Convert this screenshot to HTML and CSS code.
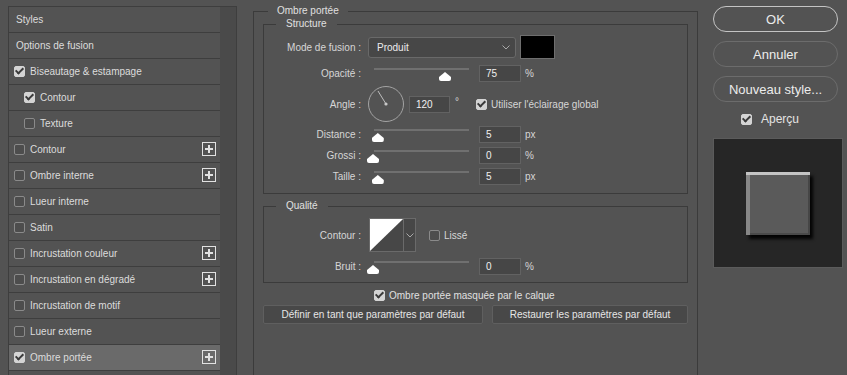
FILE: index.html
```html
<!DOCTYPE html>
<html lang="fr">
<head>
  <meta charset="UTF-8" />
  <meta name="viewport" content="width=device-width, initial-scale=1" />
  <title>Style de calque</title>
  <link rel="stylesheet" href="styles.css">
</head>
<body>
  <!-- Liste des effets -->
  <div class="effects">
    <ul class="effect-list">
      <li class="effect plain">Styles</li>
      <li class="effect plain">Options de fusion</li>
      <li class="effect"><span class="check on"></span>Biseautage &amp; estampage</li>
      <li class="effect sub"><span class="check on"></span>Contour</li>
      <li class="effect sub"><span class="check"></span>Texture</li>
      <li class="effect"><span class="check"></span>Contour<span class="add"></span></li>
      <li class="effect"><span class="check"></span>Ombre interne<span class="add"></span></li>
      <li class="effect"><span class="check"></span>Lueur interne</li>
      <li class="effect"><span class="check"></span>Satin</li>
      <li class="effect"><span class="check"></span>Incrustation couleur<span class="add"></span></li>
      <li class="effect"><span class="check"></span>Incrustation en dégradé<span class="add"></span></li>
      <li class="effect"><span class="check"></span>Incrustation de motif</li>
      <li class="effect"><span class="check"></span>Lueur externe</li>
      <li class="effect active"><span class="check on"></span>Ombre portée<span class="add"></span></li>
    </ul>
    <div class="scrollbar"></div>
  </div>

  <!-- Réglages de l'effet -->
  <div class="options">
    <fieldset class="group">
      <legend>Ombre portée</legend>

      <fieldset class="box structure">
        <legend>Structure</legend>
        <div class="row row-mode">
          <span class="lbl">Mode de fusion :</span>
          <div class="select">Produit
            <svg class="chevron" width="8" height="5" viewBox="0 0 8 5"><path d="M0.5 0.5L4 4L7.5 0.5" fill="none" stroke="#a9a9a9"/></svg>
          </div>
          <div class="swatch"></div>
        </div>
        <div class="row">
          <span class="lbl">Opacité :</span>
          <div class="slider"><span class="thumb" style="left: 75%"></span></div>
          <div class="field">75</div>
          <span class="unit">%</span>
        </div>
        <div class="row row-angle">
          <span class="lbl">Angle :</span>
          <svg class="dial" width="36" height="36" viewBox="0 0 36 36">
            <circle cx="18" cy="18" r="17.5" fill="none" stroke="#a3a3a3"/>
            <path d="M18 18L10 5" stroke="#bdbdbd" stroke-width="1"/>
            <circle cx="18" cy="18" r="1.6" fill="#c8c8c8"/>
          </svg>
          <div class="field field-angle">120</div>
          <span class="deg">°</span>
          <span class="check on global-check"></span>
          <span class="check-text">Utiliser l'éclairage global</span>
        </div>
        <div class="row">
          <span class="lbl">Distance :</span>
          <div class="slider"><span class="thumb" style="left: 5%"></span></div>
          <div class="field">5</div>
          <span class="unit">px</span>
        </div>
        <div class="row">
          <span class="lbl">Grossi :</span>
          <div class="slider"><span class="thumb" style="left: 0%"></span></div>
          <div class="field">0</div>
          <span class="unit">%</span>
        </div>
        <div class="row">
          <span class="lbl">Taille :</span>
          <div class="slider"><span class="thumb" style="left: 5%"></span></div>
          <div class="field">5</div>
          <span class="unit">px</span>
        </div>
      </fieldset>

      <fieldset class="box quality">
        <legend>Qualité</legend>
        <div class="row row-contour">
          <span class="lbl">Contour :</span>
          <div class="curve">
            <svg class="curve-shape" width="33" height="32" viewBox="0 0 33 32"><polygon points="0,0 33,0 0,32" fill="#fff"/></svg>
            <span class="curve-arrow">
              <svg width="8" height="5" viewBox="0 0 8 5"><path d="M0.5 0.5L4 4L7.5 0.5" fill="none" stroke="#a9a9a9"/></svg>
            </span>
          </div>
          <span class="check smooth-check"></span>
          <span class="check-text">Lissé</span>
        </div>
        <div class="row">
          <span class="lbl">Bruit :</span>
          <div class="slider"><span class="thumb" style="left: 0%"></span></div>
          <div class="field">0</div>
          <span class="unit">%</span>
        </div>
      </fieldset>

      <div class="mask-row">
        <span class="check on"></span>
        <span>Ombre portée masquée par le calque</span>
      </div>
      <div class="defaults">
        <button>Définir en tant que paramètres par défaut</button>
        <button>Restaurer les paramètres par défaut</button>
      </div>
    </fieldset>
  </div>

  <!-- Boutons et aperçu -->
  <div class="actions">
    <button class="btn btn-primary">OK</button>
    <button class="btn">Annuler</button>
    <button class="btn">Nouveau style...</button>
    <div class="preview-toggle"><span class="check on"></span>Aperçu</div>
    <div class="preview">
      <div class="tile"></div>
    </div>
  </div>
</body>
</html>
```

FILE: styles.css
```css
* {
  box-sizing: border-box;
}

body {
  margin: 0;
  width: 847px;
  height: 375px;
  overflow: hidden;
  display: flex;
  align-items: flex-start;
  background: #535353;
  color: #d6d6d6;
  font-family: 'Liberation Sans', Arial, sans-serif;
  font-size: 10px;
}

/* Checkbox */
.check {
  flex: none;
  display: flex;
  align-items: center;
  justify-content: center;
  width: 11px;
  height: 11px;
  border: 1px solid #8a8a8a;
  border-radius: 2px;
  background: #4d4d4d;
}

.check.on {
  background: #d4d4d4;
  border-color: #d4d4d4;
}

.check.on::after {
  content: "";
  width: 3px;
  height: 6px;
  margin-top: -2px;
  border: solid #3a3a3a;
  border-width: 0 2px 2px 0;
  transform: rotate(45deg);
}

/* Liste des effets */
.effects {
  display: flex;
  width: 229px;
  height: 369px;
  margin: 6px 0 0 8px;
  border: 1px solid #3e3e3e;
  border-bottom: none;
}

.effect-list {
  flex: 1;
  margin: 0;
  padding: 0;
  list-style: none;
}

.scrollbar {
  width: 16px;
  background: #4a4a4a;
}

.effect {
  display: flex;
  align-items: center;
  gap: 5px;
  height: 26px;
  padding: 0 4px 1px 5px;
  border-bottom: 1px solid #3e3e3e;
  color: #dcdcdc;
}

.effect.plain {
  padding-left: 7px;
}

.effect.sub {
  padding-left: 15px;
}

.effect.active {
  background: #6a6a6a;
}

.add {
  position: relative;
  flex: none;
  width: 14px;
  height: 14px;
  margin-left: auto;
  border: 1px solid #e2e2e2;
}

.add::before,
.add::after {
  content: "";
  position: absolute;
  background: #e2e2e2;
}

.add::before {
  left: 2px;
  right: 2px;
  top: 5px;
  height: 2px;
}

.add::after {
  top: 2px;
  bottom: 2px;
  left: 5px;
  width: 2px;
}

/* Réglages */
.options {
  width: 445px;
  margin-left: 16px;
}

fieldset {
  margin: 0;
  min-width: 0;
  border: 1px solid #3b3b3b;
}

legend {
  line-height: 12px;
  color: #e0e0e0;
}

.group {
  height: 370px;
  margin-top: 5px;
  padding: 0 9px;
  border-bottom: none;
}

.group > legend {
  margin-left: 5px;
  padding: 0 9px;
}

.box {
  padding: 0 0 8px;
}

.box > legend {
  margin-left: 12px;
  padding: 0 10px;
}

.structure {
  margin-top: 1px;
}

.quality {
  margin-top: 6px;
  padding-bottom: 7px;
}

.row {
  display: flex;
  align-items: center;
  height: 17px;
  margin-top: 4px;
}

.row-mode {
  height: 24px;
  margin: 5px 0 6px;
}

.row-angle {
  height: 36px;
}

.row-contour {
  height: 34px;
  margin-top: 6px;
}

.quality .row + .row {
  margin-top: 6px;
}

.lbl {
  flex: none;
  width: 97px;
  text-align: right;
}

.select {
  display: flex;
  align-items: center;
  justify-content: space-between;
  width: 148px;
  height: 21px;
  margin-left: 7px;
  padding: 0 5px 0 8px;
  border: 1px solid #696969;
  border-radius: 3px;
  background: #474747;
  color: #ececec;
}

.swatch {
  width: 35px;
  height: 24px;
  margin-left: 4px;
  background: #000;
  border: 1px solid #6e6e6e;
}

.slider {
  position: relative;
  flex: none;
  width: 96px;
  height: 17px;
  margin-left: 12px;
}

.slider::before {
  content: "";
  position: absolute;
  left: 1px;
  right: 0;
  top: 3px;
  height: 2px;
  background: #707070;
}

.thumb {
  position: absolute;
  top: 7px;
  width: 12px;
  height: 9px;
  transform: translateX(-50%);
  background: #fff;
  clip-path: polygon(50% 0, 100% 55%, 100% 100%, 0 100%, 0 55%);
  border-radius: 0 0 2px 2px;
}

.field {
  flex: none;
  width: 42px;
  height: 17px;
  margin-left: 10px;
  padding-left: 6px;
  line-height: 15px;
  background: #464646;
  border: 1px solid #626262;
  color: #f0f0f0;
}

.unit {
  margin-left: 4px;
}

.dial {
  flex: none;
  margin-left: 7px;
}

.field-angle {
  width: 41px;
  margin-left: 5px;
}

.deg {
  margin: -6px 0 0 5px;
}

.global-check {
  margin-left: 17px;
}

.check-text {
  margin-left: 4px;
}

.curve {
  display: flex;
  height: 34px;
  margin-left: 8px;
  border: 1px solid #6a6a6a;
  background: #474747;
}

.curve-shape {
  display: block;
}

.curve-arrow {
  display: flex;
  align-items: center;
  justify-content: center;
  width: 12px;
  border-left: 1px solid #6a6a6a;
}

.smooth-check {
  margin-left: 13px;
}

.mask-row {
  display: flex;
  align-items: center;
  gap: 4px;
  height: 12px;
  margin-top: 6px;
  padding-left: 111px;
  color: #e0e0e0;
}

.defaults {
  display: flex;
  gap: 9px;
  margin-top: 4px;
}

.defaults button {
  height: 19px;
  padding: 0;
  font: inherit;
  color: #e6e6e6;
  background: #484848;
  border: 1px solid #5f5f5f;
  border-radius: 2px;
}

.defaults button:first-child {
  width: 220px;
}

.defaults button:last-child {
  flex: 1;
}

/* Boutons et aperçu */
.actions {
  display: flex;
  flex-direction: column;
  width: 130px;
  margin: 6px 0 0 15px;
}

.btn {
  width: 125px;
  height: 26px;
  margin-bottom: 9px;
  padding: 0;
  border: 1px solid #6c6c6c;
  border-radius: 13px;
  background: transparent;
  color: #ececec;
  font: 13px 'Liberation Sans', Arial, sans-serif;
}

.btn-primary {
  border-color: #c4c4c4;
}

.preview-toggle {
  display: flex;
  align-items: center;
  gap: 9px;
  height: 12px;
  margin-top: 2px;
  padding-left: 28px;
  font-size: 12px;
  color: #e4e4e4;
}

.preview {
  display: flex;
  align-items: center;
  justify-content: center;
  width: 130px;
  height: 130px;
  margin-top: 13px;
  background: #262626;
  border: 1px solid #5b5b5b;
}

.tile {
  width: 64px;
  height: 63px;
  background: #5a5a5a;
  box-shadow:
    inset 0 3px 0 #c4c4c4,
    inset 4px 0 0 #878787,
    inset -2px 0 0 #464646,
    inset 0 -2px 0 #4a4a4a,
    3px 4px 3px rgba(0, 0, 0, 0.9);
}
```
